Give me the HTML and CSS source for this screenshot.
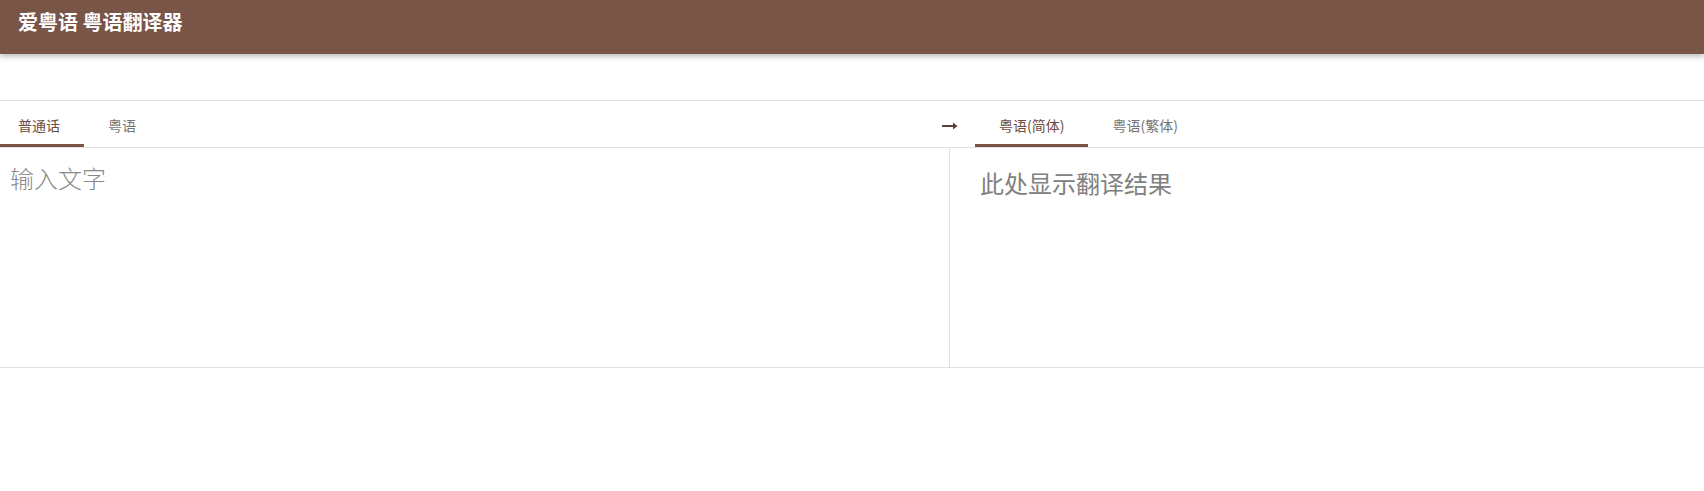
FILE: index.html
```html
<!DOCTYPE html>
<html lang="zh-CN">
<head>
    <meta charset="UTF-8" />
    <title>爱粤语 粤语翻译器</title>
    <meta name="viewport" content="width=device-width, initial-scale=1" />
    <link rel="stylesheet" href="styles.css">
</head>
<body>
    <header class="topbar">
        <h1 class="title">爱粤语 粤语翻译器</h1>
    </header>
    <main class="translator">
        <div class="tabbar">
            <div class="tabs tabs-source">
                <button class="tab tab-first active">普通话</button>
                <button class="tab">粤语</button>
            </div>
            <div class="swap">
                <svg width="16" height="10" viewBox="0 0 16 10">
                    <path d="M0 5h13" stroke="#5d4037" stroke-width="2"/>
                    <path d="M11 1.5l4.5 3.5-4.5 3.5z" fill="#5d4037"/>
                </svg>
            </div>
            <div class="tabs tabs-target">
                <button class="tab active">粤语(简体)</button>
                <button class="tab">粤语(繁体)</button>
            </div>
        </div>
        <div class="panels">
            <div class="panel panel-source">
                <textarea class="input" placeholder="输入文字"></textarea>
            </div>
            <div class="panel panel-target">
                <div class="result">此处显示翻译结果</div>
            </div>
        </div>
    </main>
</body>
</html>
```

FILE: styles.css
```css
body {
    margin: 0;
    padding: 0;
    font-family: "Noto Sans CJK SC", "Noto Sans", sans-serif;
    background: #fff;
}
.topbar {
    height: 54px;
    box-sizing: border-box;
    padding: 10px 18px 0;
    background: #795548;
    box-shadow: 0 2px 6px rgba(0,0,0,0.3);
    position: relative;
    z-index: 1;
}
.title {
    margin: 0;
    color: #fff;
    font-size: 20px;
    line-height: 24px;
    font-weight: bold;
}
.translator {
    margin-top: 46px;
    border-top: 1px solid #e0e0e0;
}
.tabbar {
    display: flex;
    height: 46px;
    border-bottom: 1px solid #e0e0e0;
}
.tabs {
    display: flex;
}
.tabs-source {
    width: calc(55.75% - 8px);
}
.swap {
    width: 16px;
    display: flex;
    align-items: center;
    justify-content: center;
    padding-top: 4px;
}
.tabs-target {
    margin-left: 17px;
}
.tab {
    background: none;
    border: none;
    border-bottom: 3px solid transparent;
    padding: 4px 24px 0;
    font-family: inherit;
    font-size: 14px;
    color: #757575;
    cursor: pointer;
}
.tab-first {
    padding-left: 18px;
}
.tab.active {
    color: #6d4c41;
    border-bottom-color: #795548;
}
.panels {
    display: flex;
    height: 219px;
    border-bottom: 1px solid #e0e0e0;
}
.panel-source {
    width: 55.75%;
    border-right: 1px solid #e0e0e0;
    box-sizing: border-box;
}
.panel-target {
    flex: 1;
    padding: 17px 30px;
}
.input {
    width: 100%;
    height: 100%;
    box-sizing: border-box;
    border: none;
    outline: none;
    resize: none;
    padding: 12px 10px;
    font-family: inherit;
    font-size: 24px;
    font-weight: 300;
    line-height: 36px;
    color: #333;
}
.input::placeholder {
    color: #8a8a8a;
}
.result {
    font-size: 24px;
    line-height: 36px;
    color: #808080;
}
```
